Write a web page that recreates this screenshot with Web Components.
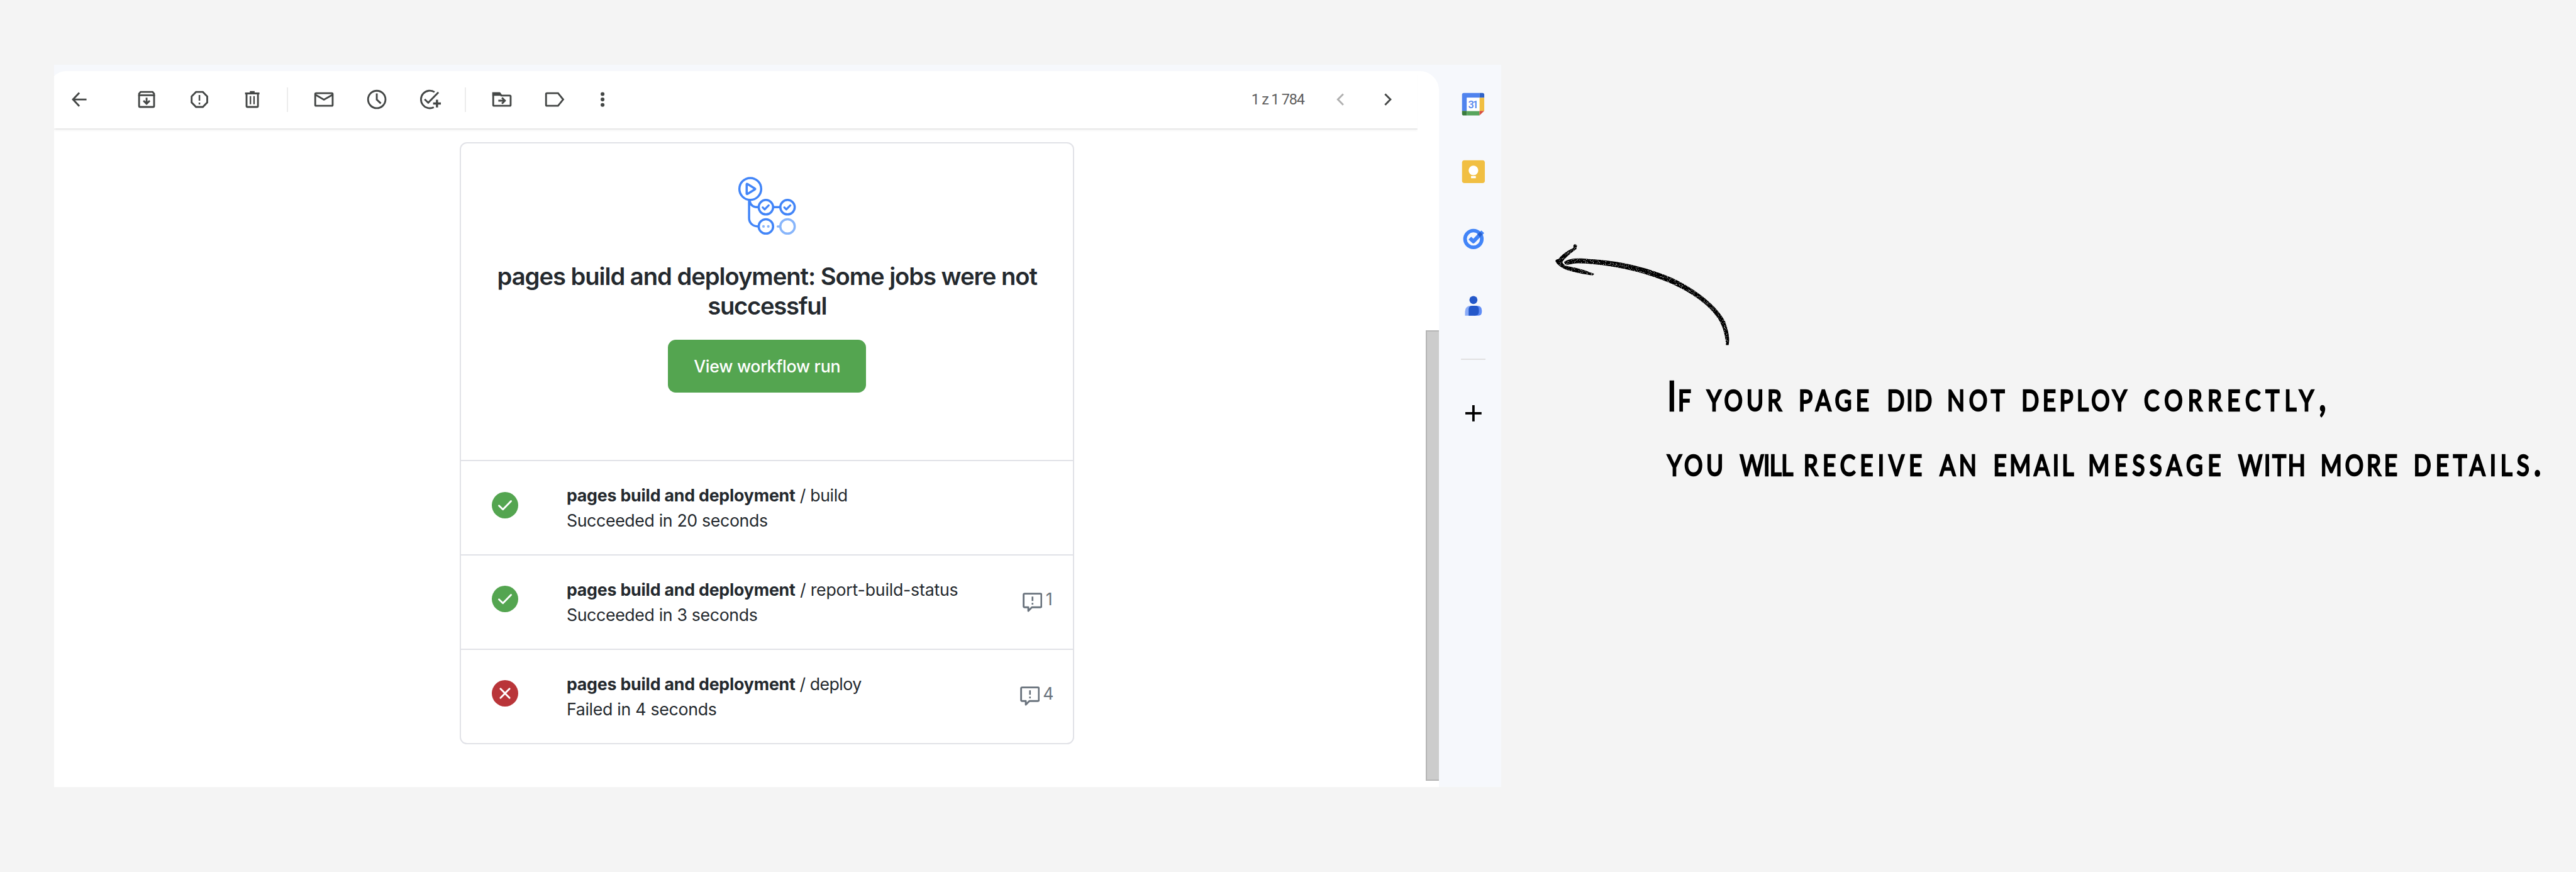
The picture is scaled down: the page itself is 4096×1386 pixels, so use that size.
<!DOCTYPE html>
<html lang="en">
<head>
<meta charset="utf-8">
<title>Deployment email</title>
<style>
/* 1rem = 100 design pixels on a 4290px wide canvas */
html{font-size:calc(100vw / 42.9)}
body{margin:0;background:#f4f4f4;overflow:hidden}
</style>
</head>
<body>
<help-figure></help-figure>
<script>
const define = (name, html, init) => customElements.define(name, class extends HTMLElement {
  connectedCallback() {
    if (this.shadowRoot) return;
    this.attachShadow({ mode: 'open' }).innerHTML = typeof html === 'function' ? html(this) : html;
    if (init) init(this);
  }
});
const rem = () => parseFloat(getComputedStyle(document.documentElement).fontSize) / 100;

/* Text tracked to a given width (design pixels) */
define('fit-text', '<style>:host{display:inline;white-space:pre}</style><slot></slot>', el => {
  const n = [...el.textContent].length;
  const natural = el.getBoundingClientRect().width / (+el.getAttribute('sx') || 1);
  el.style.letterSpacing = ((+el.getAttribute('w') * rem() - natural) / n) + 'px';
});

const ICONS = {
  back: '<path d="M20 8.8 9.5 20 20 31.2M9.5 20H32"/>',
  archive: '<path d="M7.5 12.5V31q0 1.5 1.5 1.5h22q1.500 0 1.500-1.500V12.500"/><path d="M7.500 13V10.500L10 7.500H30L32.500 10.500V13Z"/><path d="M20 17v9M14.800 22 20 27.200 25.200 22"/>',
  spam: '<path d="M14.300 7.500H25.700L33 15V25L25.700 32.500H14.300L7 25V15Z"/><path stroke-width="2.600" d="M20 12.500V22M20 25.200v3"/>',
  trash: '<path d="M8 10H32M16 7.500H24M10.500 10V31q0 1.500 1.500 1.500H28q1.500 0 1.500-1.500V10"/><path stroke-width="2.400" d="M17 14.500V28M23 14.500V28"/>',
  mail: '<rect x="5.500" y="9.500" width="29" height="21" rx="1.500"/><path d="M5.500 12 20 20.300 34.500 12"/>',
  clock: '<circle cx="20" cy="20" r="14.500"/><path d="M20 10V20.300L26.800 26.600"/>',
  task: '<path d="M28.200 7.700A14.600 14.600 0 1 0 27 32.900M11.700 19.700 17.700 25.400 34.700 8"/><path stroke-width="3.600" d="M32.300 20.300V33.200M25.800 26.700H38.800"/>',
  folder: '<path d="M5.500 9.500H16L19 13.500H33q1.500 0 1.500 1.500V29q0 1.500-1.500 1.500H7q-1.500 0-1.500-1.500Z"/><path fill="#444746" d="M5.500 9.500H16L18 12.500H5.500Z"/><path d="M14 22H25M20 17 25 22 20 27"/>',
  label: '<path d="M7 9.500H25.500L34 20 25.500 30.500H7q-1.500 0-1.500-1.500V11q0-1.500 1.500-1.500Z"/>',
  more: '<g fill="#444746" stroke="none"><circle cx="20" cy="11" r="3.200"/><circle cx="20" cy="20" r="3.200"/><circle cx="20" cy="29" r="3.200"/></g>',
  prev: '<path stroke="#b0b0b0" d="M25 11 16 20 25 29"/>',
  next: '<path d="M15 11 24 20 15 29"/>'
};
define('tool-icon', el => `<style>:host{display:block;width:.4rem;height:.4rem;flex:none}svg{display:block;width:100%;height:100%;overflow:visible}</style>
<svg viewBox="0 0 40 40" fill="none" stroke="#444746" stroke-width="3">${ICONS[el.getAttribute('name')]}</svg>`);

define('mail-toolbar', `<style>
:host{display:flex;align-items:center;box-sizing:border-box;height:.96rem;padding-left:.22rem;background:#fff;
 box-shadow:0 .02rem .01rem #e9e9e9,0 .03rem .05rem rgba(0,0,0,.09);clip-path:inset(0 0 -.12rem 0)}
.g{display:flex;gap:.48rem}
i{width:.02rem;height:.4rem;background:#ececec;flex:none}
.n{margin-left:10.6rem;width:.88rem;font:400 .245rem/.4rem Roboto,sans-serif;color:#5e5e5e}
</style>
<tool-icon name="back"></tool-icon>
<div class="g" style="margin-left:.72rem"><tool-icon name="archive"></tool-icon><tool-icon name="spam"></tool-icon><tool-icon name="trash"></tool-icon></div>
<i style="margin:0 .4rem 0 .38rem"></i>
<div class="g"><tool-icon name="mail"></tool-icon><tool-icon name="clock"></tool-icon><tool-icon name="task"></tool-icon></div>
<i style="margin:0 .4rem 0 .38rem"></i>
<div class="g"><tool-icon name="folder"></tool-icon><tool-icon name="label"></tool-icon></div>
<tool-icon name="more" style="margin-left:.4rem"></tool-icon>
<span class="n"><fit-text w="88">1 z 1 784</fit-text></span>
<tool-icon name="prev" style="margin-left:.4rem"></tool-icon>
<tool-icon name="next" style="margin-left:.4rem"></tool-icon>`);

define('workflow-logo', `<style>:host{display:block;width:1rem;height:1rem}svg{display:block;width:100%;height:100%}</style>
<svg viewBox="84 40 300 300" fill="none" stroke="#4285f8" stroke-width="11" stroke-linecap="round" stroke-linejoin="round">
<path stroke-linecap="butt" d="M144 158V250C144 274 163 291 190 291M147 163C150 184 164 195 190 195M266 195H298"/>
<circle cx="150" cy="104" r="54.500"/><path d="M132 80V128Q133 130 136 128.500L173 106Q176 104 173 102L136 79.500Q133 78 132 80Z"/>
<circle cx="228" cy="195" r="36"/><circle cx="336" cy="195" r="36"/><circle cx="228" cy="291" r="36"/>
<path stroke-width="10" d="M212 196 222 206 242 186M320 196 330 206 350 186"/>
<g stroke="#87b5fb"><circle cx="336" cy="291" r="36"/><path d="M287 291H297"/></g>
<g fill="#87b5fb" stroke="none"><circle cx="216" cy="291" r="6.500"/><circle cx="240" cy="291" r="6.500"/></g></svg>`);

define('job-row', el => {
  const bad = el.getAttribute('status') === 'failed', c = el.getAttribute('notes');
  return `<style>
:host{display:flex;align-items:center;box-sizing:border-box;height:1.57rem;border-top:.0211rem solid #e1e2e7;padding:0 .3rem 0 .505rem;font:400 .28rem/.42rem Inter,sans-serif;color:#24292e}
.s{width:.44rem;height:.44rem;margin-bottom:.1rem;flex:none;display:block}
.t{margin-left:.81rem;flex:1;white-space:nowrap}
::slotted(b){font-weight:600}
.c{display:flex;align-items:center;color:#6a737d}
.c svg{width:.33rem;height:.33rem;margin-right:.055rem;display:block}
.c span{padding-bottom:.11rem}
</style>
<svg class="s" viewBox="0 0 44 44" fill="none" stroke="#fff" stroke-width="3" stroke-linecap="round" stroke-linejoin="round"><circle cx="22" cy="22" r="22" stroke="none" fill="${bad ? '#b93539' : '#54a550'}"/>
<path d="${bad ? 'M14.500 14.500 29.500 29.500M29.500 14.500 14.500 29.500' : 'M12 22.800 18.500 29 32 15.200'}"/></svg>
<div class="t"><slot></slot></div>
${c ? `<div class="c"><svg viewBox="0 0 33 33" fill="none" stroke="#6a737d" stroke-width="3" stroke-linejoin="round"><path d="M3.500 1.700H29.500Q31.300 1.700 31.300 3.500V22.500Q31.300 24.300 29.500 24.300H15.500L9.500 30.300V24.300H3.500Q1.700 24.300 1.700 22.500V3.500Q1.700 1.700 3.500 1.700Z"/><path stroke-width="2.800" d="M16.500 6.500V14M16.500 17V20"/></svg><span><fit-text w="${c === '1' ? 15.5 : 20}">${c}</fit-text></span></div>` : ''}`;
});

define('run-card', `<style>
:host{display:block;box-sizing:border-box;width:10.23rem;height:10.02rem;border:.0211rem solid #e1e2e7;border-radius:.12rem;background:#fff}
.h{display:flex;flex-direction:column;align-items:center;box-sizing:border-box;height:5.27rem;padding-top:.543rem}
h1{margin:.42rem 0 .307rem;font:600 .4rem/.5rem Inter,sans-serif;color:#24292e;text-align:center;white-space:nowrap}
h1 div{height:.5rem}
.b{display:flex;align-items:center;justify-content:center;width:3.3rem;height:.88rem;border-radius:.13rem;background:#54a550;color:#fff;font:500 .28rem/.42rem Inter,sans-serif}
</style>
<div class="h"><workflow-logo></workflow-logo>
<h1><div><fit-text w="899">pages build and deployment: Some jobs were not</fit-text></div><div><fit-text w="198">successful</fit-text></div></h1>
<div class="b"><fit-text w="244">View workflow run</fit-text></div></div>
<job-row><p style="margin:0"><b><fit-text w="381">pages build and deployment</fit-text></b><fit-text w="87"> / build</fit-text></p><p style="margin:0"><fit-text w="335">Succeeded in 20 seconds</fit-text></p></job-row>
<job-row notes="1"><p style="margin:0"><b><fit-text w="381">pages build and deployment</fit-text></b><fit-text w="271"> / report-build-status</fit-text></p><p style="margin:0"><fit-text w="318">Succeeded in 3 seconds</fit-text></p></job-row>
<job-row status="failed" notes="4"><p style="margin:0"><b><fit-text w="381">pages build and deployment</fit-text></b><fit-text w="110"> / deploy</fit-text></p><p style="margin:0"><fit-text w="250">Failed in 4 seconds</fit-text></p></job-row>`);

define('side-panel', `<style>
:host{display:flex;flex-direction:column;align-items:center;box-sizing:border-box;width:1.04rem;padding:.41rem 0 0 .11rem}
svg{display:block;width:.5rem;height:.5rem;margin-bottom:.62rem;flex:none}
i{width:.4rem;height:.0211rem;background:#e1e1e1}
</style>
<svg viewBox="0 0 50 50"><path fill="#5083ee" d="M9 6H35V14H14V36H6V9Q6 6 9 6Z"/><path fill="#2f63c9" d="M35 6H40Q43 6 43 9V14H35Z"/><path fill="#f1bf42" d="M35 14H43V36H35Z"/><path fill="#3a7c3d" d="M6 36H14V43.500H9Q6 43.500 6 40.500Z"/><path fill="#58a55c" d="M14 36H35V43.500H14Z"/><path fill="#d95040" d="M35 36H43L35 43.500Z"/><path fill="#fff" d="M14 14H35V36H14Z"/><text x="24.700" y="31" text-anchor="middle" font-family="Roboto,sans-serif" font-weight="500" font-size="17" textLength="17" fill="#5083ee">31</text></svg>
<svg viewBox="0 0 50 50"><rect x="6" y="6" width="38" height="38" rx="4" fill="#f1bf42"/><circle cx="25" cy="23" r="8" fill="#fff"/><path fill="#fff" d="M21 28H29V30H21ZM21 32.300H29V36H21Z"/></svg>
<svg viewBox="0 0 50 50"><circle cx="25" cy="25" r="14" fill="none" stroke="#4285f8" stroke-width="6"/><path d="M19 23.500 25 29 40.500 13" fill="none" stroke="#4285f8" stroke-width="6.500" stroke-linejoin="round"/><path d="M31.500 17.500 36 13Q39 15.500 40 17.500L35.700 22Q34 19 31.500 17.500Z" fill="#2a60cc"/></svg>
<svg viewBox="0 0 50 50"><circle cx="25" cy="14.500" r="6.700" fill="#2458c9"/><path fill="#8aabf7" d="M11 40.500V34Q11 24 21 24H25V40.500Z"/><path fill="#5f8cf6" d="M25 24H31Q39 24 39 32V34Q39 40.500 33 40.500H25Z"/><path fill="#2458c9" d="M23 24H28Q34 24 34 30V34Q34 40.500 27.500 40.500H17V30Q17 24 23 24Z"/></svg>
<i></i>
<svg style="margin:.64rem 0 0" viewBox="0 0 50 50"><path d="M25 11.500V38.500M11.500 25H38.500" stroke="#000" stroke-width="4"/></svg>`);

define('mail-window', `<style>
:host{display:flex;width:24.1rem;height:12.02rem;background:#f6f8fc;overflow:hidden;flex:none}
.m{display:flex;box-sizing:border-box;width:23.16rem;margin:.1rem 0 0 -.1rem;background:#fff;border-radius:.32rem .32rem 0 0;overflow:hidden;flex:none}
.c{width:22.94rem;flex:none}
run-card{margin:.23rem 0 0 6.86rem}
mail-toolbar{margin-left:.1rem;width:22.71rem}
.sb{box-sizing:border-box;width:.22rem;height:7.5rem;margin-top:4.32rem;background:#ccc;border:solid #b5b5b5;border-width:.0211rem 0 .0211rem .0211rem}
</style>
<div class="m"><div class="c"><mail-toolbar></mail-toolbar><run-card></run-card></div><div class="sb"></div></div>
<side-panel></side-panel>`);

define('hand-arrow', `<style>:host{display:block;width:3.6rem;height:2.2rem}svg{display:block;width:100%;height:100%}</style>
<svg viewBox="0 0 1080 660"><defs><filter id="g" x="0" y="0" width="1" height="1" filterUnits="objectBoundingBox"><feTurbulence type="fractalNoise" baseFrequency=".35" numOctaves="2" seed="4" result="n"/><feDisplacementMap in="SourceGraphic" in2="n" scale="4" result="d"/><feColorMatrix in="n" type="matrix" values="0 0 0 0 0 0 0 0 0 0 0 0 0 0 0 0 -5 0 0 3.900" result="k"/><feComposite in="d" in2="k" operator="in"/></filter></defs>
<g filter="url(#g)"><path fill="none" d="M0 0H1080V660H0Z"/>
<path d="M135 168C155 150 200 146 260 153C420 160 560 198 680 250C800 308 900 388 940 466C957 516 964 550 957 583L944 583C942 540 930 490 905 452C860 384 780 324 660 271C540 223 420 193 300 181C230 173 190 172 160 181C145 184 138 178 135 168Z"/>
<path d="M182 84Q190 74 200 86L196 104C170 122 140 148 126 168C132 182 140 186 160 190C200 198 240 208 286 227L278 235C230 228 190 220 150 208C125 198 100 182 92 164C92 156 100 156 108 152C125 130 150 112 181 98Z"/></g></svg>`);

/* Each word: text, width, distance to the next word's start (design pixels) */
const LINES = [
  [['If', 42, 66], ['your', 131, 153], ['page', 124, 147], ['did', 78, 100], ['not', 103, 124], ['deploy', 181, 204], ['correctly,', 312, 312]],
  [['you', 99, 121], ['will', 88, 106], ['receive', 205, 227], ['an', 67, 89], ['email', 139, 158], ['message', 229, 250], ['with', 115, 137], ['more', 133, 155], ['details.', 220, 220]]
];
const SX = .8;
define('hand-note', `<style>
:host{display:block;font:small-caps 400 .685rem/1.083rem Lato,sans-serif;color:#000;white-space:nowrap;transform:scaleX(${SX});transform-origin:0 0;-webkit-text-stroke:.028rem #000;stroke-linejoin:round;width:18rem}
</style>` + LINES.map(l => '<div>' + l.map(([t, w, a], i) => `<fit-text sx="${SX}" w="${w / SX}">${t}</fit-text>` + (i < l.length - 1 ? `<fit-text sx="${SX}" w="${(a - w) / SX}"> </fit-text>` : '')).join('') + '</div>').join(''));

define('help-figure', `<style>
:host{display:flex;align-items:flex-start;box-sizing:border-box;width:42.9rem;height:14.52rem;padding:1.08rem 0 0 .9rem;background:#f4f4f4;overflow:hidden}
.n{padding-top:2.72rem}
hand-arrow{margin-left:.6rem}
hand-note{margin:.03rem 0 0 2.77rem}
</style>
<mail-window></mail-window><div class="n"><hand-arrow></hand-arrow><hand-note></hand-note></div>`);
</script>
</body>
</html>
